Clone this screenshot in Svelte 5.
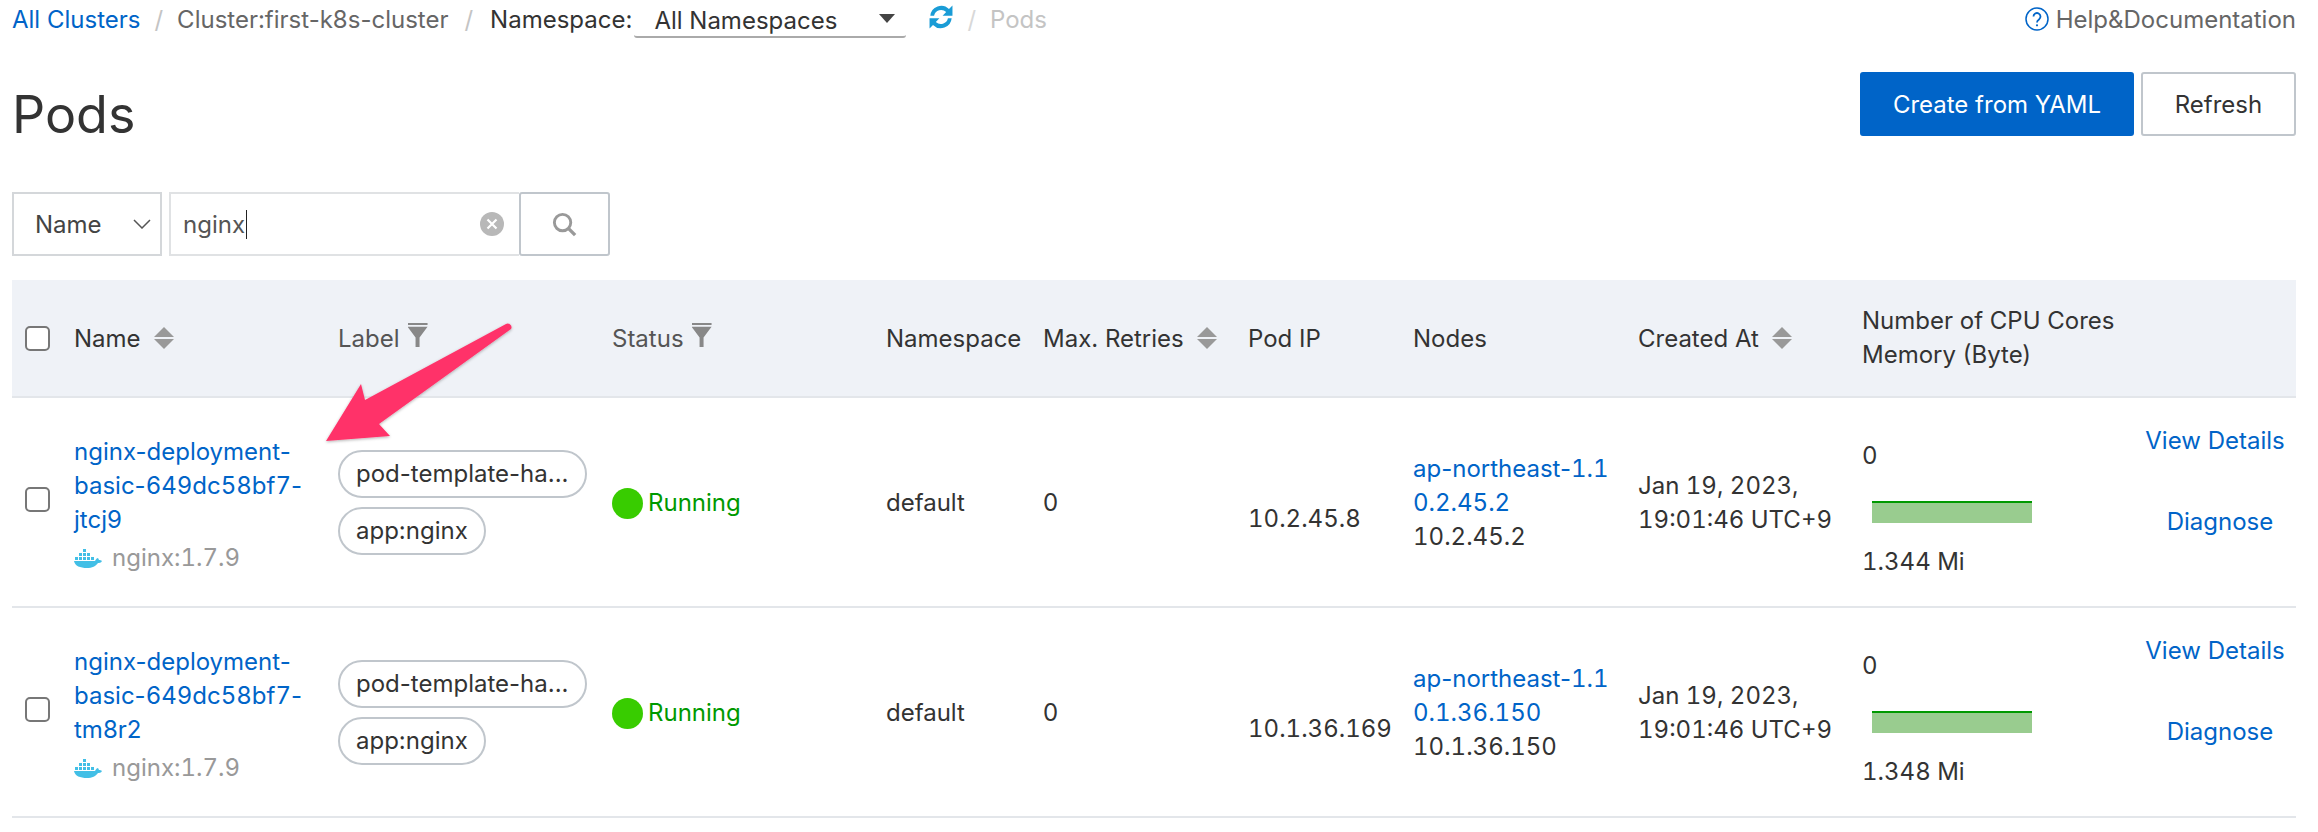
<script>
  const rows = [
    { suffix: 'jtcj9', ip: '10.2.45.8', nodeB: '0.2.45.2', nodeIp: '10.2.45.2', mem: '1.344 Mi' },
    { suffix: 'tm8r2', ip: '10.1.36.169', nodeB: '0.1.36.150', nodeIp: '10.1.36.150', mem: '1.348 Mi' }
  ];
</script>

<div class="page">
  <nav class="crumbs">
    <a href="#top" class="link">All Clusters</a>
    <span class="sep">/</span>
    <span class="muted">Cluster:first-k8s-cluster</span>
    <span class="sep wide">/</span>
    <span class="ns-label">Namespace:</span>
    <div class="ns-select">
      <span>All Namespaces</span>
      <i class="ns-caret"></i>
    </div>
    <svg class="reload" viewBox="3 2.500 18 19" width="24" height="26">
      <path d="M4 11a8.200 8.200 0 0 1 14-5l2.600-2.600V11h-7.400l2.700-2.700A5.400 5.400 0 0 0 6.800 11z" fill="#1a9cd6" />
      <path d="M20 13a8.200 8.200 0 0 1-14 5l-2.600 2.600V13h7.400l-2.700 2.700A5.400 5.400 0 0 0 17.200 13z" fill="#1a9cd6" />
    </svg>
    <span class="sep light">/</span>
    <span class="faint">Pods</span>
    <div class="help">
      <svg viewBox="0 0 24 24" width="24" height="24">
        <circle cx="12" cy="12" r="11" fill="none" stroke="#0064c8" stroke-width="1.500" />
        <path d="M8.500 9.500a3.500 3.500 0 1 1 5.500 2.900c-1.200.8-2 1.400-2 3" fill="none" stroke="#0064c8" stroke-width="1.800" />
        <circle cx="12" cy="18.300" r="1.100" fill="#0064c8" />
      </svg>
      <span>Help&amp;Documentation</span>
    </div>
  </nav>

  <header class="title-row">
    <h1>Pods</h1>
    <div class="actions">
      <button class="btn primary">Create from YAML</button>
      <button class="btn">Refresh</button>
    </div>
  </header>

  <div class="search">
    <div class="field-select">
      <span>Name</span>
      <svg viewBox="0 0 18 10" width="18" height="10"><path d="M1 1l8 8 8-8" fill="none" stroke="#555" stroke-width="1.500" /></svg>
    </div>
    <div class="field-input">
      <span class="typed">nginx</span>
      <svg class="clear" viewBox="0 0 24 24" width="24" height="24">
        <circle cx="12" cy="12" r="12" fill="#b8b8b8" />
        <path d="M7.500 7.500l9 9M16.500 7.500l-9 9" stroke="#fff" stroke-width="2.200" />
      </svg>
    </div>
    <button class="field-btn" aria-label="Search">
      <svg viewBox="0 0 28 28" width="27" height="27">
        <circle cx="12" cy="12" r="8.500" fill="none" stroke="#999" stroke-width="3" />
        <path d="M18 18l7 7" stroke="#999" stroke-width="3.500" />
      </svg>
    </button>
  </div>

  <div class="table">
    <div class="row head">
      <div class="cell"><i class="check"></i></div>
      <div class="cell">Name<i class="sort"></i></div>
      <div class="cell muted-head">Label<i class="filter"></i></div>
      <div class="cell muted-head">Status<i class="filter"></i></div>
      <div class="cell">Namespace</div>
      <div class="cell">Max. Retries<i class="sort"></i></div>
      <div class="cell">Pod IP</div>
      <div class="cell">Nodes</div>
      <div class="cell">Created At<i class="sort"></i></div>
      <div class="cell stack">
        <span>Number of CPU Cores</span>
        <span>Memory (Byte)</span>
      </div>
    </div>

    {#each rows as r}
      <div class="row body">
        <div class="cell"><i class="check raised"></i></div>
        <div class="cell stack name-cell">
          <a href="#top" class="link">nginx-deployment-</a>
          <a href="#top" class="link">basic-<span class="num">649dc58bf7</span>-</a>
          <a href="#top" class="link">{r.suffix}</a>
          <span class="image num">
            <svg viewBox="0 0 28 20" width="28" height="20">
              <g fill="#42bfe6">
                <rect x="9" y="1" width="3" height="3" />
                <rect x="5" y="5" width="3" height="3" /><rect x="9" y="5" width="3" height="3" /><rect x="13" y="5" width="3" height="3" />
                <rect x="1" y="9" width="3" height="3" /><rect x="5" y="9" width="3" height="3" /><rect x="9" y="9" width="3" height="3" /><rect x="13" y="9" width="3" height="3" /><rect x="17" y="9" width="3" height="3" />
                <path d="M0 13h21c1-2 2-3 3-3l1 2c1 0 2 0 3 1-1 2-3 2-4 2-2 3-6 5-11 5-7 0-12-2-13-7z" />
              </g>
            </svg>
            nginx:1.7.9
          </span>
        </div>
        <div class="cell pills">
          <span class="pill">pod-template-ha...</span>
          <span class="pill">app:nginx</span>
        </div>
        <div class="cell running"><i class="dot"></i>Running</div>
        <div class="cell plain">default</div>
        <div class="cell plain">0</div>
        <div class="cell pod-ip num">{r.ip}</div>
        <div class="cell stack nudged">
          <a href="#top" class="link">ap-northeast-<span class="num">1.1</span></a>
          <a href="#top" class="link num">{r.nodeB}</a>
          <span class="num">{r.nodeIp}</span>
        </div>
        <div class="cell stack nudged num">
          <span>Jan 19, 2023,</span>
          <span>19:01:46 UTC+9</span>
        </div>
        <div class="cell usage num">
          <span>0</span>
          <div class="spark"></div>
          <span>{r.mem}</span>
        </div>
        <div class="cell ops">
          <a href="#top" class="link">View Details</a>
          <a href="#top" class="link diagnose">Diagnose</a>
        </div>
      </div>
    {/each}
  </div>

  <svg class="arrow" viewBox="0 0 240 150" width="240" height="150">
    <defs>
      <filter id="soft" x="-10%" y="-10%" width="120%" height="120%">
        <feDropShadow dx="0" dy="1" stdDeviation="1.500" flood-color="#000" flood-opacity="0.300" />
      </filter>
    </defs>
    <path d="M6 131L41 74l4 16L186 14c3-2 7 2 5 5L59 114l11 12z" fill="#ff3369" filter="url(#soft)" />
  </svg>
</div>

<style>
  :global(body) {
    margin: 0;
    background: #fff;
  }

  .page {
    position: relative;
    width: 2318px;
    height: 832px;
    box-sizing: border-box;
    padding: 0 22px 0 12px;
    font-family: Inter, "Noto Sans", sans-serif;
    font-size: 24px;
    color: #333;
    overflow: hidden;
  }

  .num {
    font-variant-numeric: tabular-nums;
  }

  .link {
    color: #0064c8;
    text-decoration: none;
  }

  .crumbs {
    display: flex;
    align-items: center;
    height: 38px;
  }

  .sep {
    margin: 0 14px;
    color: #c4c4c4;
  }

  .sep.wide {
    margin: 0 17px 0 16px;
  }

  .sep.light {
    margin: 0 14px;
    color: #d8d8d8;
  }

  .muted {
    color: #666;
  }

  .faint {
    color: #c4c4c4;
  }

  .ns-label {
    margin-right: 2px;
    color: #333;
  }

  .ns-select {
    display: flex;
    align-items: center;
    justify-content: space-between;
    box-sizing: border-box;
    width: 272px;
    height: 38px;
    padding: 5px 11px 0 20px;
    border-bottom: 2px solid #aaa;
    border-radius: 0 0 3px 3px;
  }

  .ns-caret {
    width: 0;
    height: 0;
    margin-bottom: 4px;
    border-left: 8px solid transparent;
    border-right: 8px solid transparent;
    border-top: 9px solid #444;
  }

  .reload {
    margin-left: 23px;
    margin-top: -4px;
  }

  .help {
    display: flex;
    align-items: center;
    gap: 7px;
    margin-left: auto;
    color: #666;
  }

  .title-row {
    display: flex;
    align-items: center;
    justify-content: space-between;
    height: 64px;
    margin-top: 34px;
  }

  h1 {
    margin: 20px 0 0;
    font-size: 52px;
    font-weight: 400;
    color: #333;
  }

  .actions {
    display: flex;
    gap: 7px;
  }

  .btn {
    height: 64px;
    padding: 0;
    width: 155px;
    background: #fff;
    border: 2px solid #c0c6cc;
    border-radius: 3px;
    font: inherit;
    color: #333;
  }

  .btn.primary {
    width: 274px;
    background: #0064c8;
    border-color: #0064c8;
    color: #fff;
  }

  .search {
    display: flex;
    height: 64px;
    margin-top: 56px;
  }

  .field-select {
    display: flex;
    align-items: center;
    justify-content: space-between;
    box-sizing: border-box;
    width: 150px;
    padding: 0 9px 0 21px;
    border: 2px solid #d4d7da;
    color: #444;
  }

  .field-input {
    display: flex;
    align-items: center;
    justify-content: space-between;
    box-sizing: border-box;
    width: 350px;
    margin-left: 7px;
    padding: 0 15px 0 12px;
    border: 2px solid #e0e2e4;
    border-right: 0;
  }

  .typed {
    padding-right: 1px;
    border-right: 1px solid #222;
    color: #555;
  }

  .field-btn {
    display: flex;
    align-items: center;
    justify-content: center;
    width: 91px;
    padding: 0;
    background: #fff;
    border: 2px solid #c0c6cc;
    border-radius: 3px;
  }

  .table {
    width: 2284px;
    margin-top: 24px;
  }

  .row {
    display: grid;
    border-bottom: 2px solid #e3e6ea;
    box-sizing: border-box;
  }

  .row.head {
    grid-template-columns: 62px 264px 274px 274px 157px 205px 165px 225px 224px 1fr;
    height: 118px;
    background: #eff2f7;
  }

  .row.body {
    grid-template-columns: 62px 264px 274px 274px 157px 205px 165px 225px 224px 272px 1fr;
    height: 210px;
    line-height: 34px;
  }

  .cell {
    display: flex;
    align-items: center;
    min-width: 0;
    white-space: nowrap;
  }

  .cell:first-child {
    padding-left: 13px;
  }

  .muted-head {
    color: #555;
  }

  .stack {
    flex-direction: column;
    align-items: flex-start;
    justify-content: center;
    line-height: 34px;
  }

  .name-cell {
    padding-top: 6px;
  }

  .nudged {
    padding-top: 2px;
  }

  .plain {
    padding-top: 2px;
  }

  .check {
    display: block;
    box-sizing: border-box;
    width: 25px;
    height: 25px;
    background: #fff;
    border: 2px solid #777;
    border-radius: 5px;
  }

  .check.raised {
    margin-bottom: 6px;
  }

  .sort {
    display: block;
    position: relative;
    width: 20px;
    height: 22px;
    margin-left: 13px;
  }

  .sort::before,
  .sort::after {
    content: "";
    position: absolute;
    left: 0;
    border-left: 10px solid transparent;
    border-right: 10px solid transparent;
  }

  .sort::before {
    top: 0;
    border-bottom: 10px solid #999;
  }

  .sort::after {
    bottom: 0;
    border-top: 10px solid #999;
  }

  .filter {
    display: block;
    width: 20px;
    height: 24px;
    margin: -6px 0 0 8px;
    background: #888;
    clip-path: polygon(0 0, 100% 0, 100% 8%, 0 8%, 0 16%, 100% 16%, 60% 60%, 60% 100%, 40% 100%, 40% 60%, 0 16%);
  }

  .image {
    display: flex;
    align-items: center;
    gap: 10px;
    margin-top: 4px;
    color: #999;
  }

  .pills {
    flex-direction: column;
    align-items: flex-start;
    justify-content: center;
    gap: 9px;
  }

  .pill {
    box-sizing: border-box;
    height: 48px;
    padding: 0 16px;
    line-height: 44px;
    background: #fff;
    border: 2px solid #c0c6cc;
    border-radius: 24px;
  }

  .running {
    padding-top: 2px;
    color: #009900;
  }

  .dot {
    display: block;
    width: 31px;
    height: 31px;
    margin-right: 5px;
    background: #38cc00;
    border-radius: 50%;
  }

  .pod-ip {
    padding-top: 34px;
  }

  .usage {
    flex-direction: column;
    align-items: flex-start;
    justify-content: center;
    padding-top: 14px;
  }

  .spark {
    box-sizing: border-box;
    width: 160px;
    height: 22px;
    margin: 28px 0 22px 10px;
    background: #99cc8f;
    border-top: 2px solid #009900;
  }

  .ops {
    flex-direction: column;
    align-items: center;
    justify-content: center;
    gap: 47px;
    margin-top: -41px;
  }

  .diagnose {
    margin-left: 10px;
  }

  .arrow {
    position: absolute;
    left: 320px;
    top: 310px;
    overflow: visible;
  }
</style>
